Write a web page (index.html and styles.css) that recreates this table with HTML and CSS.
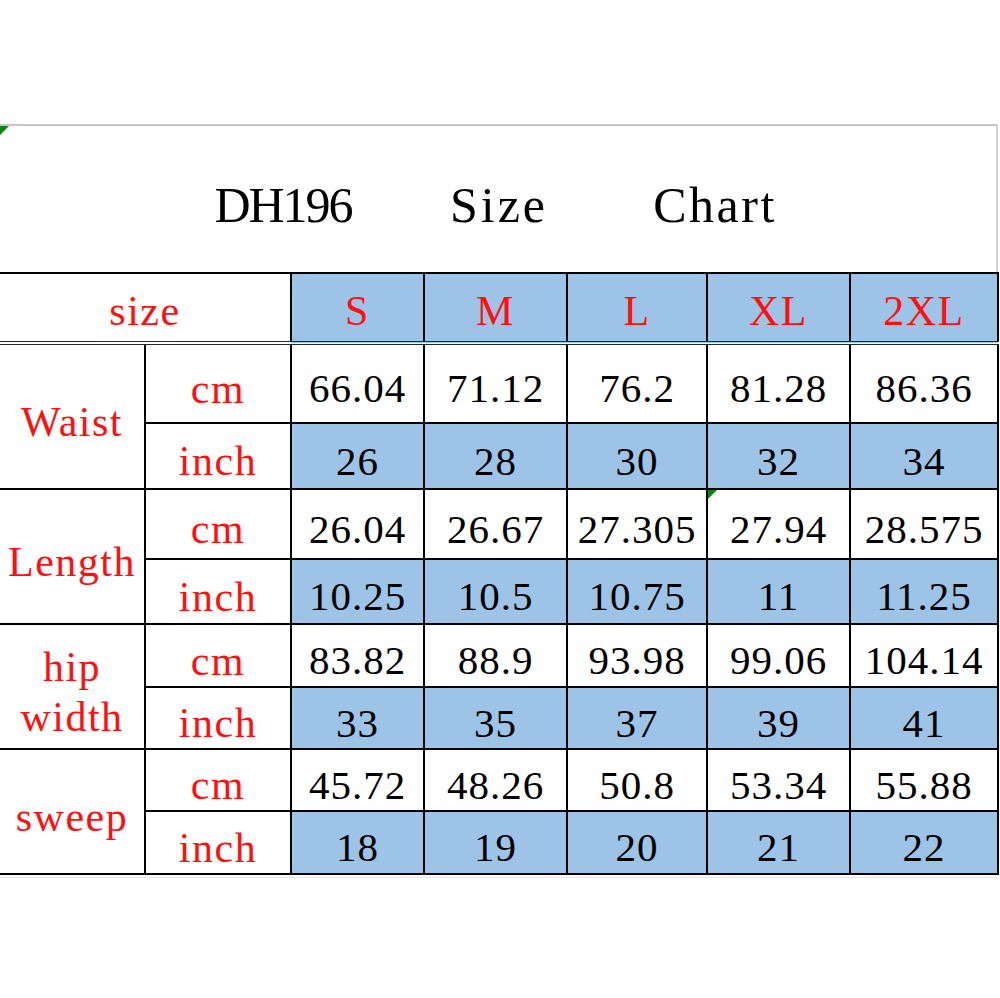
FILE: index.html
```html
<!DOCTYPE html>
<html lang="en">
<head>
<meta charset="utf-8">
<title>DH196 Size Chart</title>
<link rel="stylesheet" href="styles.css">
</head>
<body>
<div class="page">
  <div class="top-space"></div>
  <div class="title-box">
    <span class="flag flag-top"></span>
    <h1 class="title"><span class="word w1">DH196</span><span class="word w2">Size</span><span class="word w3">Chart</span></h1>
  </div>
  <table class="chart">
    <colgroup>
      <col class="c-label"><col class="c-unit"><col class="c-s"><col class="c-m"><col class="c-l"><col class="c-xl"><col class="c-2xl">
    </colgroup>
    <tr class="r-head">
      <th colspan="2" class="red head-lab">size</th>
      <th class="red blue">S</th><th class="red blue">M</th><th class="red blue">L</th><th class="red blue">XL</th><th class="red blue last">2XL</th>
    </tr>
    <tr class="r-wc">
      <td rowspan="2" class="red group">Waist</td><td class="red unit">cm</td>
      <td class="num">66.04</td><td class="num">71.12</td><td class="num">76.2</td><td class="num">81.28</td><td class="num last">86.36</td>
    </tr>
    <tr class="r-wi">
      <td class="red unit">inch</td>
      <td class="num blue">26</td><td class="num blue">28</td><td class="num blue">30</td><td class="num blue">32</td><td class="num blue last">34</td>
    </tr>
    <tr class="r-lc">
      <td rowspan="2" class="red group">Length</td><td class="red unit">cm</td>
      <td class="num open shift">26.04</td><td class="num">26.67</td><td class="num">27.305</td><td class="num flagged"><span class="flag flag-cell"></span>27.94</td><td class="num last">28.575</td>
    </tr>
    <tr class="r-li">
      <td class="red unit">inch</td>
      <td class="num blue">10.25</td><td class="num blue">10.5</td><td class="num blue">10.75</td><td class="num blue">11</td><td class="num blue last">11.25</td>
    </tr>
    <tr class="r-hc">
      <td rowspan="2" class="red group two">hip<br>width</td><td class="red unit">cm</td>
      <td class="num">83.82</td><td class="num">88.9</td><td class="num">93.98</td><td class="num">99.06</td><td class="num last">104.14</td>
    </tr>
    <tr class="r-hi">
      <td class="red unit">inch</td>
      <td class="num blue">33</td><td class="num blue">35</td><td class="num blue">37</td><td class="num blue">39</td><td class="num blue last">41</td>
    </tr>
    <tr class="r-sc">
      <td rowspan="2" class="red group">sweep</td><td class="red unit">cm</td>
      <td class="num">45.72</td><td class="num">48.26</td><td class="num">50.8</td><td class="num">53.34</td><td class="num last">55.88</td>
    </tr>
    <tr class="r-si">
      <td class="red unit">inch</td>
      <td class="num blue">18</td><td class="num blue">19</td><td class="num blue">20</td><td class="num blue">21</td><td class="num blue last">22</td>
    </tr>
  </table>
  <div class="under-line"></div>
</div>
</body>
</html>
```

FILE: styles.css
```css
html, body {
  margin: 0;
  padding: 0;
  background: #ffffff;
}

.page {
  width: 1000px;
  height: 998px;
  overflow: hidden;
  font-family: "Liberation Serif", "Times New Roman", serif;
  color: #000;
}

.top-space {
  height: 124px;
}

.title-box {
  position: relative;
  width: 996px;
  height: 146px;
  border-top: 2px solid #c6c6c6;
  border-right: 2px solid #d2d2d2;
}

.flag {
  position: absolute;
  width: 0;
  height: 0;
  border-style: solid;
  border-color: #0b850b transparent transparent transparent;
}

.flag-top {
  left: 0;
  top: 0;
  border-width: 9px 9px 0 0;
}

.title {
  margin: 0;
  padding: 54px 0 0 203px;
  display: flex;
  gap: 56px;
  font-size: 50px;
  line-height: 50px;
  font-weight: normal;
}

.word {
  width: 160px;
  text-align: center;
}

.w1 { letter-spacing: -2px; }
.w2 { letter-spacing: 3px; }
.w3 { letter-spacing: 2.5px; }

.chart {
  border-collapse: collapse;
  table-layout: fixed;
  width: 998px;
}

.c-label { width: 145px; }
.c-unit { width: 146px; }
.c-s { width: 133px; }
.c-m { width: 143px; }
.c-l { width: 140px; }
.c-xl { width: 143px; }
.c-2xl { width: 148px; }

.chart th,
.chart td {
  border: 2px solid #000;
  padding: 10px 0 0 0;
  text-align: center;
  vertical-align: middle;
  font-weight: normal;
  white-space: nowrap;
}

.chart .group,
.chart .head-lab {
  border-left-style: hidden;
}

.r-head th {
  border-bottom: 4px double #2a2a2a;
  padding-top: 6px;
}

.r-head { height: 70px; }
.r-wc { height: 80px; }
.r-wi { height: 66px; }
.r-lc { height: 70px; }
.r-li { height: 65px; }
.r-hc { height: 63px; }
.r-hi { height: 62px; }
.r-sc { height: 62px; }
.r-si { height: 63px; }

.red {
  color: #ff1010;
  font-size: 42px;
  line-height: 42px;
  letter-spacing: 1.5px;
}

.group.two {
  line-height: 50px;
  white-space: normal;
}

.num {
  font-size: 41px;
  line-height: 41px;
  letter-spacing: 1px;
}

.blue {
  background: #9dc3e6;
}

.open {
  border-bottom-style: hidden;
}

.shift {
  padding-left: 14px;
}

.flagged {
  position: relative;
}

.flag-cell {
  left: 0;
  top: 0;
  border-width: 9px 9px 0 0;
}

.under-line {
  margin-top: 2px;
  width: 998px;
  height: 1px;
  background: #e6e6e6;
}
```
